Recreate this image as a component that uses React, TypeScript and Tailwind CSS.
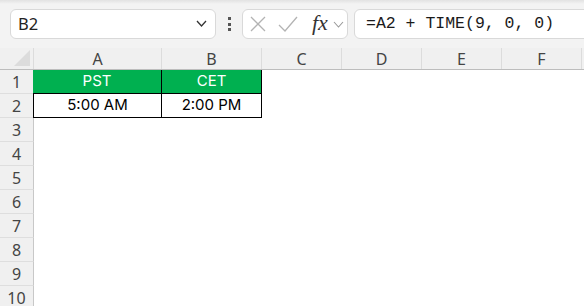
import React from "react";

const cols = [
  { l: "A", w: "w-[128px]" },
  { l: "B", w: "w-[100px]" },
  { l: "C", w: "w-[80px]" },
  { l: "D", w: "w-[80px]" },
  { l: "E", w: "w-[80px]" },
  { l: "F", w: "w-[80px]" },
];

const Chevron = ({ w = 11, h = 6, color = "#333", sw = 1.3 }: { w?: number; h?: number; color?: string; sw?: number }) => (
  <svg width={w} height={h + 2} viewBox={`0 0 ${w} ${h + 2}`} fill="none">
    <polyline points={`1,1 ${w / 2},${h} ${w - 1},1`} stroke={color} strokeWidth={sw} />
  </svg>
);

export default function App() {
  const rows = [1, 2, 3, 4, 5, 6, 7, 8, 9, 10];
  return (
    <div className="w-[584px] h-[306px] overflow-hidden bg-white font-['Noto_Sans',sans-serif] text-[#333]">
      {/* toolbar */}
      <div className="relative h-[48px] bg-[#f3f3f3] flex items-start pt-[9px]">
        <div className="absolute left-0 top-0 w-full h-[4px] bg-gradient-to-b from-[#e2e2e2] to-[#f3f3f3]" />
        <div className="ml-[10px] w-[206px] h-[30px] bg-white border border-[#d9d9d9] rounded-[6px] flex items-center justify-between pl-[7px] pr-[8px]">
          <span className="text-[16.5px] text-[#222] leading-none">B2</span>
          <Chevron />
        </div>
        <div className="w-[26px] h-[30px] flex flex-col items-center justify-center gap-[2.5px]">
          <div className="w-[3px] h-[3px] bg-[#555]" />
          <div className="w-[3px] h-[3px] bg-[#555]" />
          <div className="w-[3px] h-[3px] bg-[#555]" />
        </div>
        <div className="w-[106px] h-[30px] bg-white border border-[#d9d9d9] rounded-[6px] flex items-center pl-[7px]">
          <svg width="16" height="16" viewBox="0 0 16 16" fill="none">
            <path d="M1 1 L15 15 M15 1 L1 15" stroke="#b3b3b3" strokeWidth="1.3" />
          </svg>
          <svg className="ml-[12px]" width="20" height="16" viewBox="0 0 20 16" fill="none">
            <path d="M1 9 L7 15 L19 1" stroke="#b3b3b3" strokeWidth="1.3" />
          </svg>
          <span className="ml-[14px] font-['Liberation_Serif',serif] italic text-[22px] leading-none text-[#333] -mt-[3px]">fx</span>
          <span className="ml-[5px] mt-[2px]">
            <Chevron w={11} h={6} color="#999" sw={1.1} />
          </span>
        </div>
        <div className="ml-[6px] flex-1 -mr-[10px] h-[30px] bg-white border border-[#d9d9d9] rounded-[6px] flex items-center pl-[11px]">
          <span className="font-['Liberation_Mono',monospace] text-[16.5px] text-[#1a1a1a] leading-none whitespace-pre">=A2 + TIME(9, 0, 0)</span>
        </div>
      </div>

      {/* column headers */}
      <div className="flex h-[22px] bg-[#f0f0f0] border-b border-[#bdbdbd]">
        <div className="w-[34px] border-r border-[#dcdcdc] flex items-end justify-end pb-[3px] pr-[3px]">
          <svg width="16" height="16" viewBox="0 0 16 16">
            <polygon points="16,0 16,16 0,16" fill="#dcdcdc" />
          </svg>
        </div>
        {cols.map((c) => (
          <div key={c.l} className={`${c.w} shrink-0 border-r border-[#dcdcdc] flex items-center justify-center text-[16px] text-[#444]`}>
            {c.l}
          </div>
        ))}
      </div>

      {/* rows */}
      {rows.map((r) => (
        <div key={r} className="flex h-[24px]">
          <div className="w-[34px] shrink-0 bg-[#f0f0f0] border-r border-[#c8c8c8] border-b border-b-[#dedede] flex items-center justify-center text-[16px] text-[#444]">
            {r}
          </div>
          {r === 1 && (
            <>
              <div className="w-[129px] shrink-0 -ml-px bg-[#00b050] border-r border-b border-black flex items-center justify-center text-white text-[15px] font-['Inter',sans-serif]">
                PST
              </div>
              <div className="w-[100px] shrink-0 bg-[#00b050] border-r border-b border-black flex items-center justify-center text-white text-[15px] font-['Inter',sans-serif]">
                CET
              </div>
            </>
          )}
          {r === 2 && (
            <>
              <div className="w-[129px] shrink-0 -ml-px border-l border-r border-b border-black flex items-center justify-center text-black text-[15px] font-['Inter',sans-serif]">
                5:00 AM
              </div>
              <div className="w-[100px] shrink-0 border-r border-b border-black flex items-center justify-center text-black text-[15px] font-['Inter',sans-serif]">
                2:00 PM
              </div>
            </>
          )}
        </div>
      ))}
    </div>
  );
}
